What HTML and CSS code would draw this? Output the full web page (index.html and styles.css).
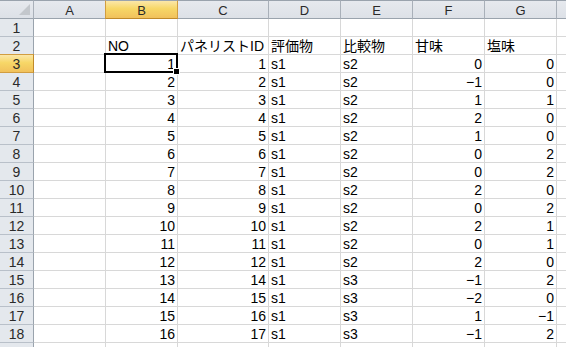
FILE: index.html
```html
<!DOCTYPE html>
<html>
<head>
<meta charset="utf-8">
<link rel="stylesheet" href="styles.css">
</head>
<body>
<div class="sheet">
  <div class="corner"><span class="tri"></span></div>
  <div class="ch">A</div><div class="ch sel">B</div><div class="ch">C</div><div class="ch">D</div><div class="ch">E</div><div class="ch">F</div><div class="ch">G</div><div class="ch last"></div>

  <div class="rh">1</div><div class="c"></div><div class="c"></div><div class="c"></div><div class="c"></div><div class="c"></div><div class="c"></div><div class="c"></div><div class="c last"></div>

  <div class="rh">2</div><div class="c"></div><div class="c">NO</div><div class="c">パネリストID</div><div class="c">評価物</div><div class="c">比較物</div><div class="c">甘味</div><div class="c">塩味</div><div class="c last"></div>

  <div class="rh sel">3</div><div class="c"></div><div class="c n active">1</div><div class="c n">1</div><div class="c">s1</div><div class="c">s2</div><div class="c n">0</div><div class="c n">0</div><div class="c last"></div>
  <div class="rh">4</div><div class="c"></div><div class="c n">2</div><div class="c n">2</div><div class="c">s1</div><div class="c">s2</div><div class="c n">−1</div><div class="c n">0</div><div class="c last"></div>
  <div class="rh">5</div><div class="c"></div><div class="c n">3</div><div class="c n">3</div><div class="c">s1</div><div class="c">s2</div><div class="c n">1</div><div class="c n">1</div><div class="c last"></div>
  <div class="rh">6</div><div class="c"></div><div class="c n">4</div><div class="c n">4</div><div class="c">s1</div><div class="c">s2</div><div class="c n">2</div><div class="c n">0</div><div class="c last"></div>
  <div class="rh">7</div><div class="c"></div><div class="c n">5</div><div class="c n">5</div><div class="c">s1</div><div class="c">s2</div><div class="c n">1</div><div class="c n">0</div><div class="c last"></div>
  <div class="rh">8</div><div class="c"></div><div class="c n">6</div><div class="c n">6</div><div class="c">s1</div><div class="c">s2</div><div class="c n">0</div><div class="c n">2</div><div class="c last"></div>
  <div class="rh">9</div><div class="c"></div><div class="c n">7</div><div class="c n">7</div><div class="c">s1</div><div class="c">s2</div><div class="c n">0</div><div class="c n">2</div><div class="c last"></div>
  <div class="rh">10</div><div class="c"></div><div class="c n">8</div><div class="c n">8</div><div class="c">s1</div><div class="c">s2</div><div class="c n">2</div><div class="c n">0</div><div class="c last"></div>
  <div class="rh">11</div><div class="c"></div><div class="c n">9</div><div class="c n">9</div><div class="c">s1</div><div class="c">s2</div><div class="c n">0</div><div class="c n">2</div><div class="c last"></div>
  <div class="rh">12</div><div class="c"></div><div class="c n">10</div><div class="c n">10</div><div class="c">s1</div><div class="c">s2</div><div class="c n">2</div><div class="c n">1</div><div class="c last"></div>
  <div class="rh">13</div><div class="c"></div><div class="c n">11</div><div class="c n">11</div><div class="c">s1</div><div class="c">s2</div><div class="c n">0</div><div class="c n">1</div><div class="c last"></div>
  <div class="rh">14</div><div class="c"></div><div class="c n">12</div><div class="c n">12</div><div class="c">s1</div><div class="c">s2</div><div class="c n">2</div><div class="c n">0</div><div class="c last"></div>
  <div class="rh">15</div><div class="c"></div><div class="c n">13</div><div class="c n">14</div><div class="c">s1</div><div class="c">s3</div><div class="c n">−1</div><div class="c n">2</div><div class="c last"></div>
  <div class="rh">16</div><div class="c"></div><div class="c n">14</div><div class="c n">15</div><div class="c">s1</div><div class="c">s3</div><div class="c n">−2</div><div class="c n">0</div><div class="c last"></div>
  <div class="rh">17</div><div class="c"></div><div class="c n">15</div><div class="c n">16</div><div class="c">s1</div><div class="c">s3</div><div class="c n">1</div><div class="c n">−1</div><div class="c last"></div>
  <div class="rh">18</div><div class="c"></div><div class="c n">16</div><div class="c n">17</div><div class="c">s1</div><div class="c">s3</div><div class="c n">−1</div><div class="c n">2</div><div class="c last"></div>
  <div class="rh"></div><div class="c"></div><div class="c"></div><div class="c"></div><div class="c"></div><div class="c"></div><div class="c"></div><div class="c"></div><div class="c last"></div>
</div>
</body>
</html>
```
FILE: styles.css
```css
html, body {
  margin: 0;
  padding: 0;
  background: #ffffff;
  overflow: hidden;
}
.sheet {
  display: grid;
  grid-template-columns: 34px 72px 72px 91px 72px 72px 72px 72px 1fr;
  grid-template-rows: 19px repeat(19, 18px);
  width: 566px;
  font-family: "Liberation Sans", "Noto Sans CJK JP", sans-serif;
  font-size: 14px;
  color: #000;
}
.corner, .ch {
  box-sizing: border-box;
  background: linear-gradient(#e6e9ee, #dde1e7);
  border-top: 1px solid #9aa3ad;
  border-bottom: 1px solid #9aa3ad;
  border-right: 1px solid #a9b0b9;
}
.corner {
  position: relative;
}
.tri {
  position: absolute;
  right: 3px;
  bottom: 3px;
  width: 0;
  height: 0;
  border-left: 11px solid transparent;
  border-bottom: 11px solid #c3c7cc;
}
.ch {
  display: flex;
  align-items: center;
  justify-content: center;
  font-size: 13px;
  color: #2a2a2a;
  line-height: 1;
  padding-top: 1px;
}
.ch.sel {
  background: linear-gradient(#fbe7a8, #f7d767 45%, #f1c15c);
  border-bottom: 1px solid #c08a2a;
  border-right: 1px solid #d19d40;
  border-left: 1px solid #d19d40;
  margin-left: -1px;
}
.ch.last, .c.last {
  border-right: none;
}
.rh {
  box-sizing: border-box;
  background: #e4e8ed;
  border-right: 1px solid #9aa3ad;
  border-bottom: 1px solid #b9c0c9;
  display: flex;
  align-items: center;
  justify-content: center;
  font-size: 14px;
  color: #2a2a2a;
  line-height: 1;
  padding-top: 1px;
}
.rh.sel {
  background: linear-gradient(#fbe7a8, #f7d767 45%, #f1c15c);
  border-right: 1px solid #c08a2a;
  border-bottom: 1px solid #d19d40;
  border-top: 1px solid #d19d40;
  margin-top: -1px;
}
.c {
  box-sizing: border-box;
  border-right: 1px solid #d8d8d8;
  border-bottom: 1px solid #d8d8d8;
  display: flex;
  align-items: flex-end;
  padding: 0 2px 0 2px;
  line-height: 16px;
  white-space: nowrap;
  overflow: visible;
}
.c.n {
  justify-content: flex-end;
}
.active {
  position: relative;
}
.active::before {
  content: "";
  position: absolute;
  left: -2px;
  top: -2px;
  right: -1px;
  bottom: -1px;
  border: 2px solid #000;
}
.active::after {
  content: "";
  position: absolute;
  right: -3px;
  bottom: -3px;
  width: 5px;
  height: 5px;
  background: #000;
  border: 1px solid #fff;
}
```
